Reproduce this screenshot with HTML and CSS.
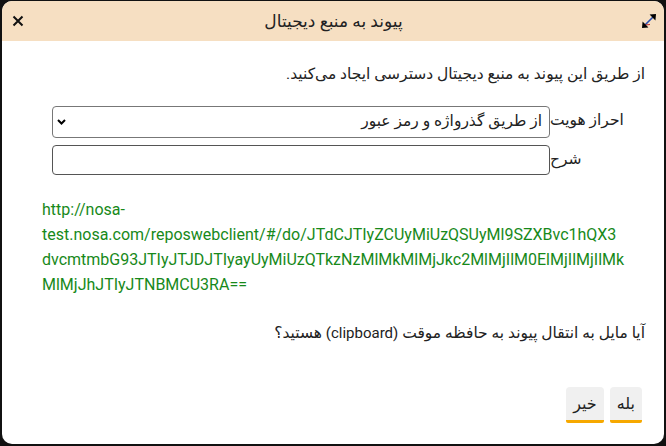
FILE: index.html
```html
<!DOCTYPE html>
<html lang="fa" dir="rtl">
<head>
<meta charset="UTF-8">
<title>پیوند به منبع دیجیتال</title>
<link rel="stylesheet" href="styles.css">
</head>
<body>
	<div class="dialog">
		<div class="dialog-head">
			<span class="head-btn expand">
				<svg width="16" height="16" viewBox="0 0 16 16">
					<path d="M3.5 12.5 L12.5 3.5" stroke="#2a4fb0" stroke-width="1.6"/>
					<path d="M4 12 L9 11.5" stroke="#c03030" stroke-width="1"/>
					<path d="M1 15 L1.6 8.6 L7.4 14.4 Z" fill="#000"/>
					<path d="M15 1 L14.4 7.4 L8.6 1.6 Z" fill="#000"/>
				</svg>
			</span>
			<span class="dialog-title">پیوند به منبع دیجیتال</span>
			<span class="head-btn close">
				<svg width="12" height="12" viewBox="0 0 12 12">
					<path d="M1.5 1.5 L10.5 10.5 M10.5 1.5 L1.5 10.5" stroke="#111" stroke-width="2"/>
				</svg>
			</span>
		</div>

		<div class="dialog-body">
			<p class="intro">از طریق این پیوند به منبع دیجیتال دسترسی ایجاد می‌کنید.</p>

			<div class="form-row first">
				<label class="form-label">احراز هویت</label>
				<div class="select-box">
					<span class="select-value">از طریق گذرواژه و رمز عبور</span>
					<svg class="select-arrow" width="9" height="6" viewBox="0 0 9 6">
						<path d="M1 1 L4.5 4.5 L8 1" stroke="#000" stroke-width="2" fill="none"/>
					</svg>
				</div>
			</div>
			<div class="form-row">
				<label class="form-label">شرح</label>
				<div class="text-box"></div>
			</div>

			<div class="link-text">http://nosa-<wbr>test.nosa.com/reposwebclient/#/do/JTdCJTIyZCUyMiUzQSUyMl9SZXBvc1hQX3<wbr>dvcmtmbG93JTIyJTJDJTIyayUyMiUzQTkzNzMlMkMlMjJkc2MlMjIlM0ElMjIlMjIlMk<wbr>MlMjJhJTIyJTNBMCU3RA==</div>

			<p class="question">آیا مایل به انتقال پیوند به حافظه موقت <span class="latin">(clipboard)</span> هستید؟</p>
		</div>

		<div class="dialog-foot">
			<span class="btn">بله</span>
			<span class="btn">خیر</span>
		</div>
	</div>
</body>
</html>
```

FILE: styles.css
```css
html,
body
{
	margin: 0;
	height: 100%;
}

body
{
	background: #111;
	font-family: Roboto, "DejaVu Sans", sans-serif;
	font-size: 15.5px;
	color: #222;
	padding: 1px 2px 2px 2px;
	box-sizing: border-box;
}

.dialog
{
	height: 100%;
	background: #fff;
	border-radius: 10px;
	display: flex;
	flex-direction: column;
	overflow: hidden;
}

.dialog-head
{
	height: 40px;
	flex: none;
	background: #f6dfc2;
	display: flex;
	align-items: center;
	padding: 0 7px 0 8px;
}

.dialog-title
{
	flex: 1;
	text-align: center;
	font-size: 17px;
	color: #222;
	margin-top: -1px;
}

.head-btn
{
	width: 16px;
	height: 16px;
	display: flex;
	align-items: center;
	justify-content: center;
}

.expand
{
	margin-top: -1px;
}

.dialog-body
{
	flex: 1;
	padding: 0 19px 0 0;
}

.intro
{
	margin: 23px 0 0 0;
	line-height: 20px;
}

.form-row
{
	display: flex;
	margin-top: 7px;
	padding-left: 50px;
}

.form-row.first
{
	margin-top: 22px;
}

.form-label
{
	width: 95px;
	flex: none;
	padding-top: 4px;
	padding-right: 6px;
	box-sizing: border-box;
	line-height: 20px;
	text-align: left;
	white-space: nowrap;
}

.select-box,
.text-box
{
	flex: 1;
	height: 32px;
	border: 1px solid #777;
	border-radius: 4px;
	box-sizing: border-box;
	display: flex;
	align-items: center;
	padding: 0 7px 0 4px;
}

.text-box
{
	height: 30px;
	border-color: #555;
}

.select-value
{
	flex: 1;
	margin-top: -2px;
}

.link-text
{
	direction: ltr;
	text-align: left;
	font-size: 16px;
	color: #17891a;
	line-height: 25px;
	margin: 22px 0 0 0;
	padding-left: 40px;
}

.question
{
	margin: 26px 0 0 0;
	line-height: 20px;
}

.latin
{
	font-size: 15px;
}

.dialog-foot
{
	flex: none;
	display: flex;
	gap: 6px;
	padding: 0 22px 21px 0;
}

.btn
{
	height: 33px;
	padding: 0 7px;
	background: #f0f0f0;
	border-radius: 4px 4px 2px 2px;
	border-bottom: 3px solid #f6a800;
	display: flex;
	align-items: center;
	font-size: 16px;
}
```
